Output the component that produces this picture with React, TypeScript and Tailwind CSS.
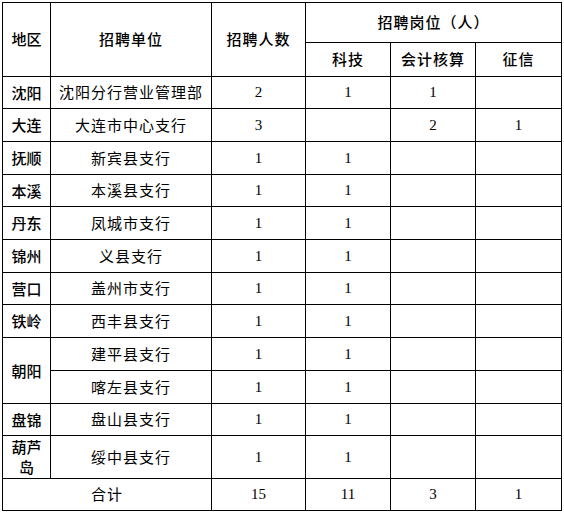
import React from "react";

const rows: { region?: string; span?: number; unit: string; n: string; a: string; b: string; c: string; h: string }[] = [
  { region: "沈阳", unit: "沈阳分行营业管理部", n: "2", a: "1", b: "1", c: "", h: "h-[32px]" },
  { region: "大连", unit: "大连市中心支行", n: "3", a: "", b: "2", c: "1", h: "h-[33px]" },
  { region: "抚顺", unit: "新宾县支行", n: "1", a: "1", b: "", c: "", h: "h-[33px]" },
  { region: "本溪", unit: "本溪县支行", n: "1", a: "1", b: "", c: "", h: "h-[32px]" },
  { region: "丹东", unit: "凤城市支行", n: "1", a: "1", b: "", c: "", h: "h-[33px]" },
  { region: "锦州", unit: "义县支行", n: "1", a: "1", b: "", c: "", h: "h-[33px]" },
  { region: "营口", unit: "盖州市支行", n: "1", a: "1", b: "", c: "", h: "h-[32px]" },
  { region: "铁岭", unit: "西丰县支行", n: "1", a: "1", b: "", c: "", h: "h-[33px]" },
  { region: "朝阳", span: 2, unit: "建平县支行", n: "1", a: "1", b: "", c: "", h: "h-[33px]" },
  { unit: "喀左县支行", n: "1", a: "1", b: "", c: "", h: "h-[33px]" },
  { region: "盘锦", unit: "盘山县支行", n: "1", a: "1", b: "", c: "", h: "h-[32px]" },
  { region: "葫芦岛", unit: "绥中县支行", n: "1", a: "1", b: "", c: "", h: "h-[43px]" },
];

const cjk = "font-['SimSun','Noto_Sans_CJK_SC',sans-serif]";
const num = "font-['Liberation_Serif','Noto_Sans_CJK_SC',serif]";
const cell = "border border-black text-center align-middle p-0";

export default function App() {
  return (
    <div className="bg-white w-[564px] h-[515px] pt-[2px] pl-[2px] text-black">
      <table className="border-collapse table-fixed w-[559px] text-[15px]">
        <colgroup>
          <col className="w-[48px]" />
          <col className="w-[161px]" />
          <col className="w-[94px]" />
          <col className="w-[85px]" />
          <col className="w-[85px]" />
          <col className="w-[86px]" />
        </colgroup>
        <tbody>
          <tr className="h-[40px]">
            <td rowSpan={2} className={`${cell} ${cjk} font-medium`}>地区</td>
            <td rowSpan={2} className={`${cell} ${cjk} font-medium tracking-[1px]`}>招聘单位</td>
            <td rowSpan={2} className={`${cell} ${cjk} font-medium tracking-[1px]`}>招聘人数</td>
            <td colSpan={3} className={`${cell} ${cjk} font-medium tracking-[1px]`}>招聘岗位（人）</td>
          </tr>
          <tr className="h-[34px]">
            <td className={`${cell} ${cjk} font-medium tracking-[1px]`}>科技</td>
            <td className={`${cell} ${cjk} font-medium tracking-[1px]`}>会计核算</td>
            <td className={`${cell} ${cjk} font-medium tracking-[1px]`}>征信</td>
          </tr>
          {rows.map((r, i) => (
            <tr key={i} className={r.h}>
              {r.region !== undefined && (
                <td
                  rowSpan={r.span ?? 1}
                  className={`${cell} ${cjk} font-medium leading-[20px] px-[5px]`}
                >
                  {r.region}
                </td>
              )}
              <td className={`${cell} ${cjk} tracking-[1px]`}>{r.unit}</td>
              <td className={`${cell} ${num}`}>{r.n}</td>
              <td className={`${cell} ${num}`}>{r.a}</td>
              <td className={`${cell} ${num}`}>{r.b}</td>
              <td className={`${cell} ${num}`}>{r.c}</td>
            </tr>
          ))}
          <tr className="h-[32px]">
            <td colSpan={2} className={`${cell} ${cjk} tracking-[1px]`}>合计</td>
            <td className={`${cell} ${num}`}>15</td>
            <td className={`${cell} ${num}`}>11</td>
            <td className={`${cell} ${num}`}>3</td>
            <td className={`${cell} ${num}`}>1</td>
          </tr>
        </tbody>
      </table>
    </div>
  );
}
